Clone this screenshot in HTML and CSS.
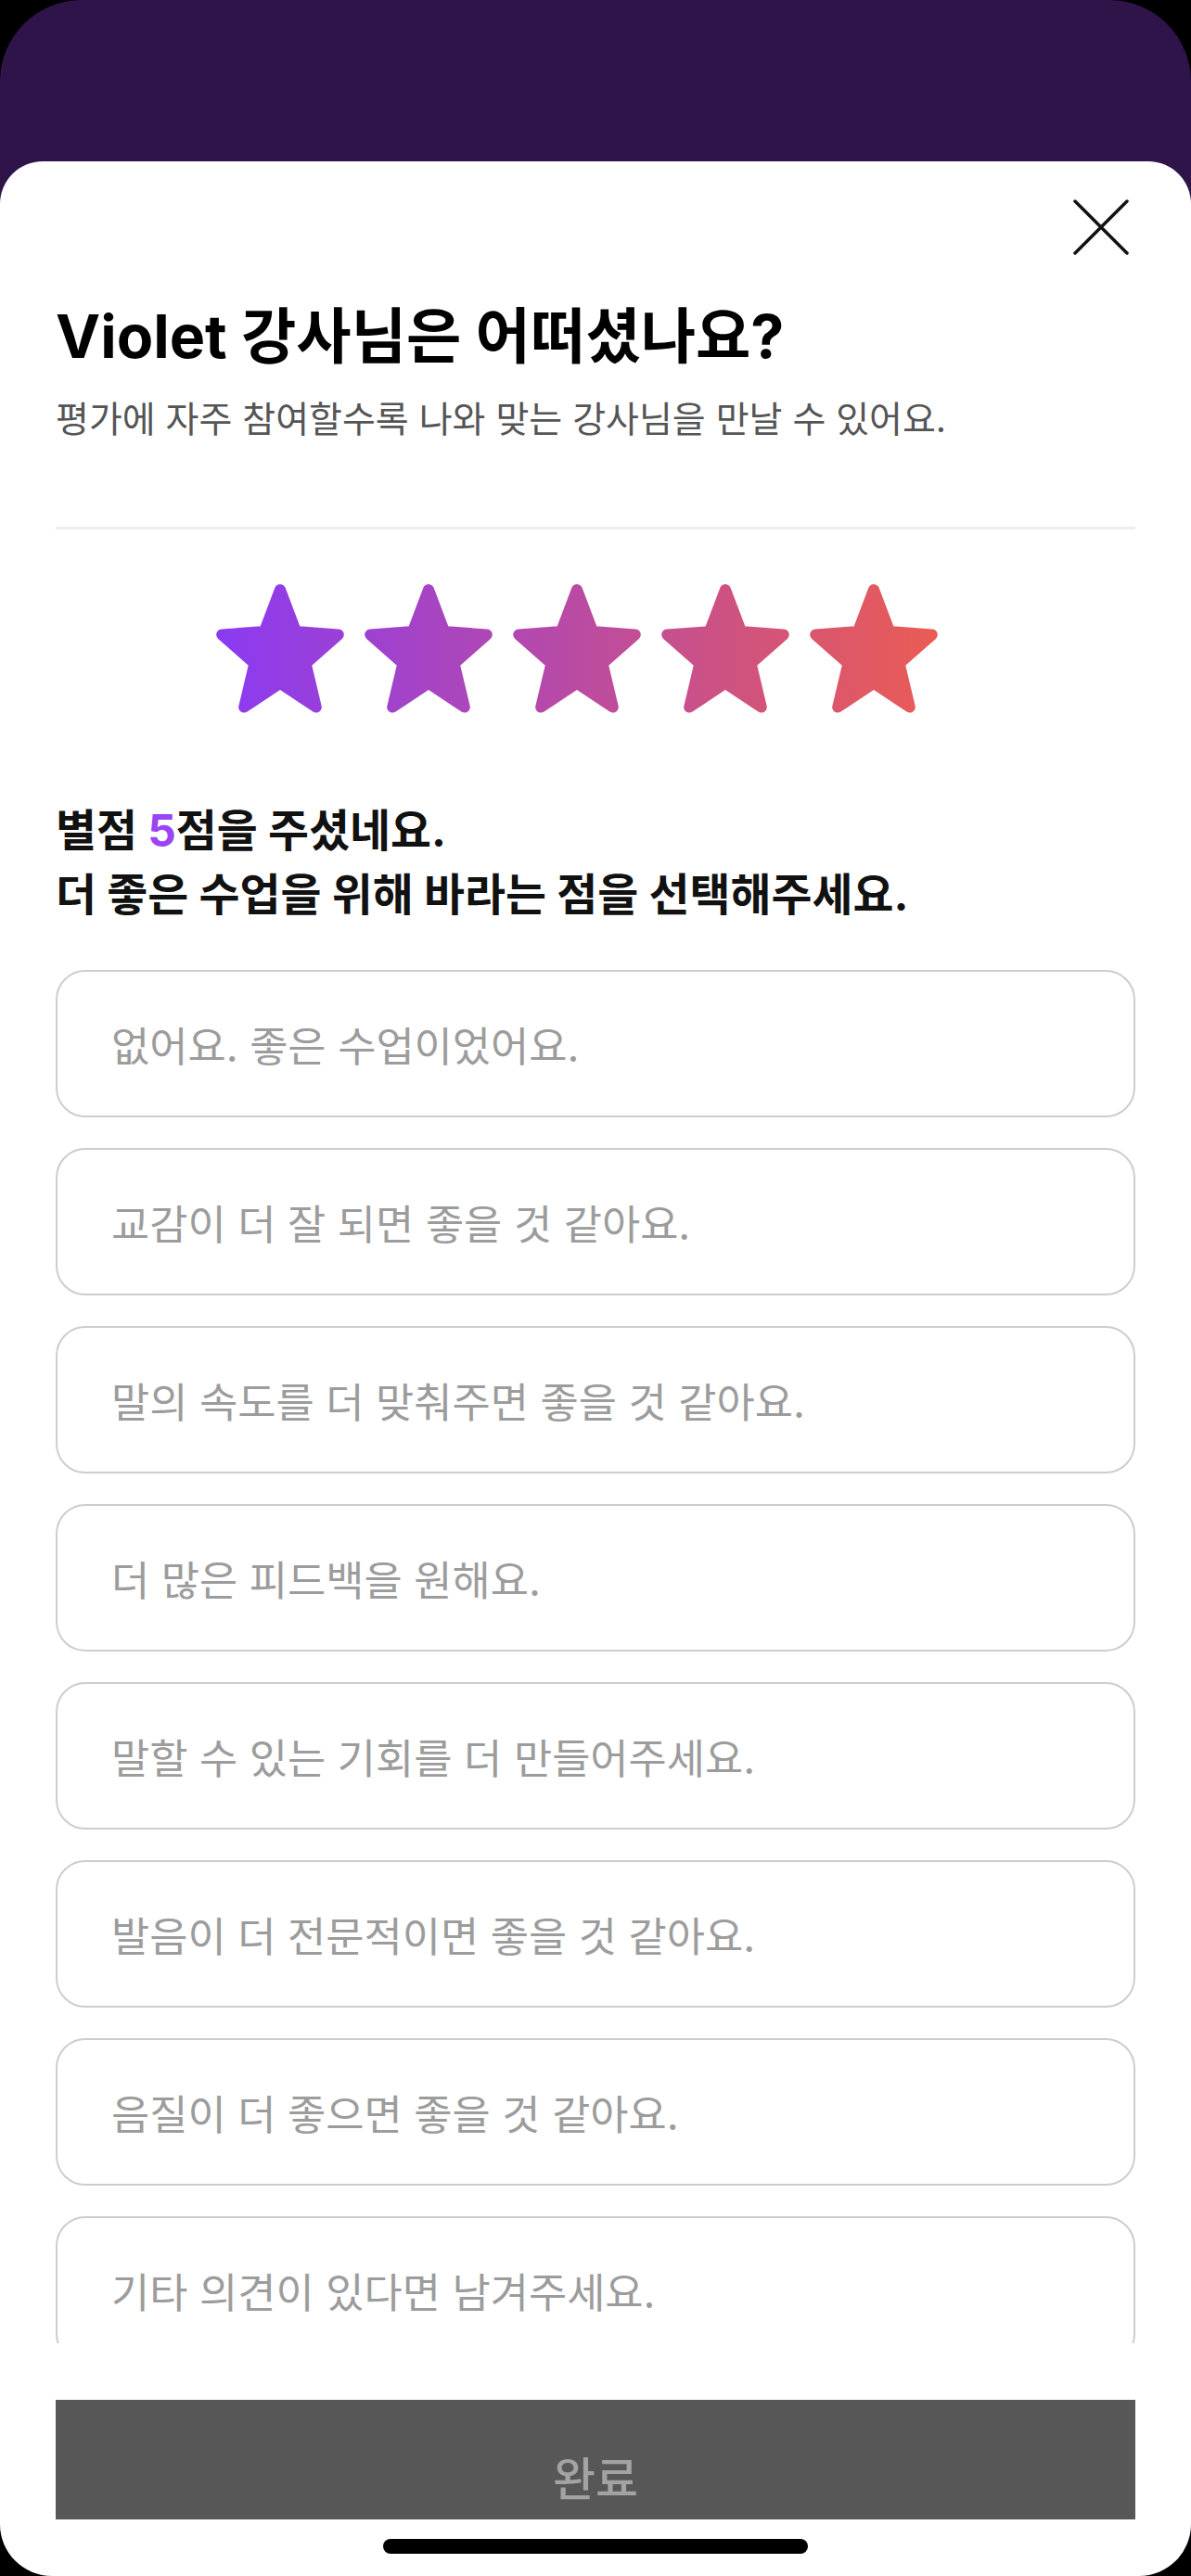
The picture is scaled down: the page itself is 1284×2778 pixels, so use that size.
FILE: index.html
```html
<!DOCTYPE html>
<html lang="ko">
<head>
    <meta charset="UTF-8">
    <meta name="viewport" content="width=device-width, initial-scale=1.0">
    <title>강사 평가</title>
    <link rel="stylesheet" href="styles.css">
</head>
<body>
    <div class="screen">
        <div class="backdrop"></div>

        <div class="sheet">
            <div class="sheet-top">
                <button class="close" aria-label="닫기">
                    <svg width="72" height="72" viewBox="0 0 72 72">
                        <path d="M8 8 L64 64 M64 8 L8 64" stroke="#111" stroke-width="3.5" stroke-linecap="round" fill="none"/>
                    </svg>
                </button>
            </div>

            <h1 class="title">Violet 강사님은 어떠셨나요?</h1>
            <p class="subtitle">평가에 자주 참여할수록 나와 맞는 강사님을 만날 수 있어요.</p>

            <hr class="divider">

            <div class="stars">
                <svg width="800" height="150" viewBox="0 0 800 150">
                    <defs>
                        <linearGradient id="starGrad" gradientUnits="userSpaceOnUse" x1="10" y1="0" x2="790" y2="0">
                            <stop offset="0" stop-color="#8a3af2"/>
                            <stop offset="1" stop-color="#ea5c53"/>
                        </linearGradient>
                    </defs>
                    <g fill="url(#starGrad)" stroke="url(#starGrad)" stroke-width="12" stroke-linejoin="round">
                        <polygon points="80,16 97.1,61.1 142.8,64.4 107.6,95.5 118.8,142.6 80,116.8 41.2,142.6 52.4,95.5 17.2,64.4 62.9,61.1"/>
                        <polygon points="240,16 257.1,61.1 302.8,64.4 267.6,95.5 278.8,142.6 240,116.8 201.2,142.6 212.4,95.5 177.2,64.4 222.9,61.1"/>
                        <polygon points="400,16 417.1,61.1 462.8,64.4 427.6,95.5 438.8,142.6 400,116.8 361.2,142.6 372.4,95.5 337.2,64.4 382.9,61.1"/>
                        <polygon points="560,16 577.1,61.1 622.8,64.4 587.6,95.5 598.8,142.6 560,116.8 521.2,142.6 532.4,95.5 497.2,64.4 542.9,61.1"/>
                        <polygon points="720,16 737.1,61.1 782.8,64.4 747.6,95.5 758.8,142.6 720,116.8 681.2,142.6 692.4,95.5 657.2,64.4 702.9,61.1"/>
                    </g>
                </svg>
            </div>

            <p class="question">별점 <span class="accent">5</span>점을 주셨네요.<br>더 좋은 수업을 위해 바라는 점을 선택해주세요.</p>

            <ul class="options">
                <li class="option">없어요. 좋은 수업이었어요.</li>
                <li class="option">교감이 더 잘 되면 좋을 것 같아요.</li>
                <li class="option">말의 속도를 더 맞춰주면 좋을 것 같아요.</li>
                <li class="option">더 많은 피드백을 원해요.</li>
                <li class="option">말할 수 있는 기회를 더 만들어주세요.</li>
                <li class="option">발음이 더 전문적이면 좋을 것 같아요.</li>
                <li class="option">음질이 더 좋으면 좋을 것 같아요.</li>
                <li class="option">기타 의견이 있다면 남겨주세요.</li>
            </ul>

            <button class="submit">완료</button>
            <div class="home-bar"></div>
        </div>
    </div>
</body>
</html>
```

FILE: styles.css
```css
body {
    margin: 0;
    background: #000;
    font-family: Inter, "Noto Sans CJK KR", sans-serif;
}
.screen {
    width: 1284px;
    height: 2778px;
    overflow: hidden;
    border-radius: 88px 88px 56px 56px;
    background: #2f1449;
    display: flex;
    flex-direction: column;
}
.backdrop {
    height: 174px;
    flex: none;
}
.sheet {
    flex: 1;
    background: #fff;
    border-radius: 46px 46px 0 0;
    padding: 35px 60px 0;
    display: flex;
    flex-direction: column;
}
.sheet-top {
    display: flex;
    justify-content: flex-end;
}
.close {
    width: 72px;
    height: 72px;
    padding: 0;
    margin-right: 1px;
    border: none;
    background: none;
    cursor: pointer;
}
.close svg {
    display: block;
}
.title {
    margin: 46px 0 0;
    font-size: 64.5px;
    line-height: 72px;
    font-weight: 700;
    color: #000;
}
.subtitle {
    margin: 29px 0 0;
    font-size: 39px;
    line-height: 48px;
    color: #555;
}
.divider {
    margin: 92px 0 0;
    height: 3px;
    border: none;
    background: #eeeeee;
}
.stars {
    margin-top: 49px;
    padding-right: 40px;
    display: flex;
    justify-content: center;
}
.stars svg {
    display: block;
}
.question {
    margin: 92px 0 0;
    font-size: 47.8px;
    line-height: 69px;
    font-weight: 700;
    color: #111;
}
.accent {
    color: #9a44f6;
}
.options {
    list-style: none;
    margin: 46px 0 0;
    padding: 0;
    height: 1481px;
    flex: none;
    overflow: hidden;
    display: flex;
    flex-direction: column;
    gap: 33px;
}
.option {
    flex: none;
    height: 159px;
    box-sizing: border-box;
    border: 2px solid #cdcdcd;
    border-radius: 32px;
    padding: 0 58px;
    display: flex;
    align-items: center;
    font-size: 44.8px;
    color: #9c9c9c;
}
.submit {
    margin-top: 61px;
    height: 129px;
    padding: 56px 0 13px;
    border: none;
    background: #575757;
    color: #a3a3a3;
    font-family: inherit;
    font-size: 50px;
    line-height: 60px;
    font-weight: 500;
}
.home-bar {
    margin: 21px auto 0;
    width: 458px;
    height: 16px;
    border-radius: 8px;
    background: #000;
}
```
